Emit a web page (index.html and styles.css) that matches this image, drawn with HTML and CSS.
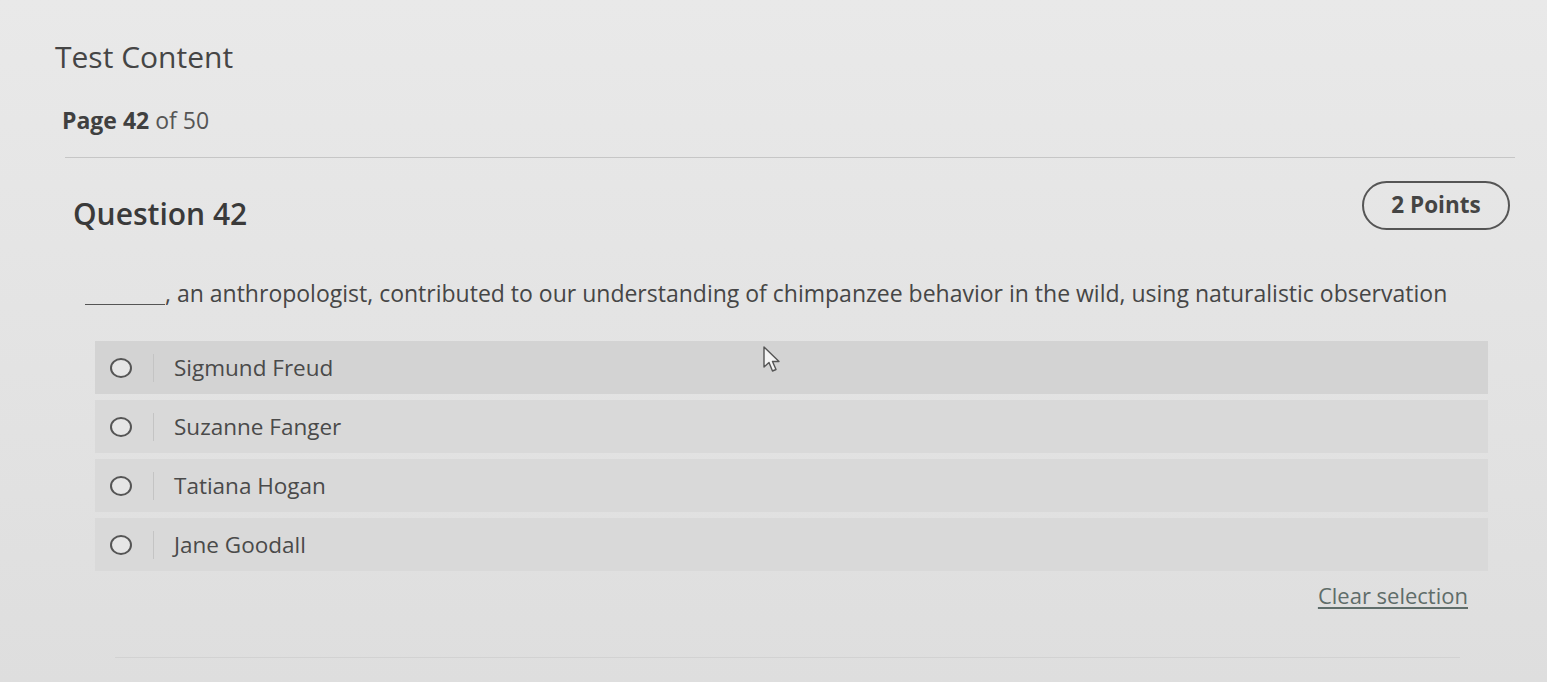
FILE: index.html
```html
<!DOCTYPE html>
<html lang="en">
<head>
<meta charset="utf-8">
<title>Test Content</title>
<link rel="stylesheet" href="styles.css">
</head>
<body>
<div class="page">
  <h1 class="title">Test Content</h1>
  <div class="pager"><b>Page 42</b> of 50</div>
  <hr class="divider">
  <section class="question">
    <div class="q-head">
      <h2 class="q-title">Question 42</h2>
      <span class="points">2 Points</span>
    </div>
    <p class="q-text"><span class="blank"></span>, an anthropologist, contributed to our understanding of chimpanzee behavior in the wild, using naturalistic observation</p>
    <ul class="options">
      <li class="option hover"><span class="radio"></span><span class="sep"></span><span class="label">Sigmund Freud</span></li>
      <li class="option"><span class="radio"></span><span class="sep"></span><span class="label">Suzanne Fanger</span></li>
      <li class="option"><span class="radio"></span><span class="sep"></span><span class="label">Tatiana Hogan</span></li>
      <li class="option"><span class="radio"></span><span class="sep"></span><span class="label">Jane Goodall</span></li>
    </ul>
    <div class="clear-row"><a class="clear" href="#">Clear selection</a></div>
    <hr class="divider bottom">
  </section>
</div>
<svg class="cursor" width="20" height="28" viewBox="0 0 20 28"><path d="M1 1 L1 21 L6 16.5 L9.5 25 L13 23.5 L9.5 15.5 L16 15.5 Z" fill="#f4f4f4" stroke="#555" stroke-width="1.4" stroke-linejoin="round"/></svg>
</body>
</html>
```
FILE: styles.css
```css
* { box-sizing: border-box; }
html, body { margin: 0; padding: 0; }
body {
  width: 1547px;
  height: 682px;
  overflow: hidden;
  background: #e3e3e3;
  background-image: linear-gradient(180deg, #e9e9e9 0%, #e4e4e4 45%, #dedede 100%);
  font-family: "Open Sans", "Noto Sans", sans-serif;
  color: #3d3d3d;
  position: relative;
}
.page {
  padding: 38px 32px 0 55px;
}
.title {
  margin: 0;
  font-size: 30px;
  font-weight: 400;
  line-height: 38px;
  color: #454545;
}
.pager {
  margin: 29px 0 0 7px;
  font-size: 23px;
  line-height: 30px;
  color: #555;
}
.pager b { font-weight: 700; color: #404040; }
.divider {
  margin: 22px 0 0 10px;
  border: 0;
  border-top: 1.5px solid #c6c6c6;
  height: 0;
}
.question { padding: 0; }
.q-head {
  display: flex;
  align-items: flex-start;
  justify-content: space-between;
  margin: 23px 5px 0 18px;
}
.q-title {
  margin: 13px 0 0 0;
  font-size: 30px;
  font-weight: 600;
  line-height: 40px;
  color: #3a3a3a;
}
.points {
  display: inline-flex;
  align-items: center;
  justify-content: center;
  width: 148px;
  height: 49px;
  border: 2px solid #555;
  border-radius: 25px;
  font-size: 22.5px;
  font-weight: 700;
  color: #444;
  padding-bottom: 2px;
}
.q-text {
  margin: 44px 0 0 30px;
  font-size: 23px;
  line-height: 30px;
  color: #464646;
  white-space: nowrap;
}
.blank {
  display: inline-block;
  width: 80px;
  border-bottom: 1.5px solid #555;
  vertical-align: -3px;
}
.options {
  list-style: none;
  margin: 33px 27px 0 40px;
  padding: 0;
  display: flex;
  flex-direction: column;
  gap: 6px;
}
.option {
  display: flex;
  align-items: center;
  height: 53px;
  background: #d9d9d9;
  padding-left: 15px;
}
.option.hover { background: #d3d3d3; }
.radio {
  width: 22px;
  height: 20px;
  border: 2.5px solid #555;
  border-radius: 50%;
  background: #e6e6e6;
  flex: none;
}
.sep {
  width: 1px;
  height: 28px;
  background: #c4c4c4;
  margin-left: 21px;
  flex: none;
}
.label {
  margin-left: 20px;
  font-size: 22.5px;
  color: #4a4a4a;
}
.clear-row {
  display: flex;
  justify-content: flex-end;
  margin: 9px 47px 0 0;
}
.clear {
  font-size: 22px;
  color: #5f6d6a;
  text-decoration: underline;
  text-underline-offset: 3px;
  line-height: 30px;
}
.divider.bottom {
  margin: 47px 55px 0 60px;
  border-top: 1px solid #d2d2d2;
}
.cursor {
  position: absolute;
  left: 763px;
  top: 346px;
}
```
